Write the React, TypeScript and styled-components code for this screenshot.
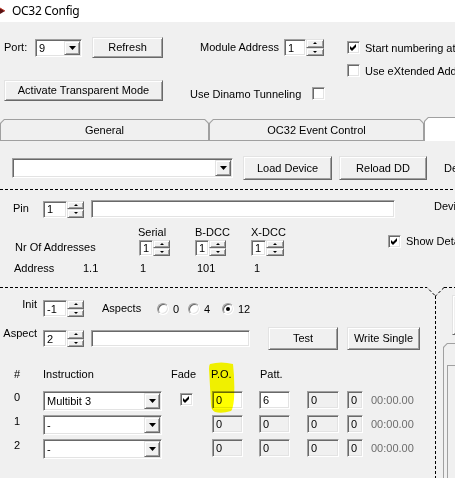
import React from "react";
import styled, { createGlobalStyle, css } from "styled-components";

const GlobalStyle = createGlobalStyle`
  html, body { margin: 0; padding: 0; background: #f0f0f0; }
  body {
    font-family: "Liberation Sans", Arial, sans-serif;
    font-size: 11px;
    color: #000;
  }
  *, *::before, *::after { box-sizing: border-box; }
`;

type Px = { $w?: number; $h?: number; $ml?: number; $mt?: number };

const sizing = css<Px>`
  ${({ $w }) => ($w !== undefined ? `width: ${$w}px; flex: 0 0 ${$w}px;` : "")}
  ${({ $h }) => ($h !== undefined ? `height: ${$h}px;` : "")}
  ${({ $ml }) => ($ml !== undefined ? `margin-left: ${$ml}px;` : "")}
  ${({ $mt }) => ($mt !== undefined ? `margin-top: ${$mt}px;` : "")}
`;

/* classic 3D edges */
const sunken = css`
  border: 1px solid;
  border-color: #a0a0a0 #ffffff #ffffff #a0a0a0;
  box-shadow: inset 1px 1px 0 #696969, inset -1px -1px 0 #e3e3e3;
`;

const raised = css`
  background: #f0f0f0;
  border: 1px solid;
  border-color: #e3e3e3 #696969 #696969 #e3e3e3;
  box-shadow: inset 1px 1px 0 #ffffff, inset -1px -1px 0 #a0a0a0;
`;

const dashedH = css`
  background-image: repeating-linear-gradient(to right, #000 0 3px, transparent 3px 5px);
`;

const Window = styled.div`
  width: 455px;
  height: 478px;
  overflow: hidden;
  background: #f0f0f0;
  white-space: nowrap;
`;

const TitleBar = styled.div`
  height: 22px;
  background: #fff;
  display: flex;
  align-items: center;
`;

const Title = styled.span`
  font-family: "Noto Sans", "Open Sans", sans-serif;
  font-size: 12px;
  letter-spacing: -0.3px;
  margin-left: 6px;
  padding-bottom: 1px;
`;

const Top = styled.div`
  padding-top: 15px;
`;

const Row = styled.div<Px & { $align?: string }>`
  display: flex;
  align-items: ${({ $align }) => $align ?? "center"};
  ${sizing}
`;

const Label = styled.span<Px & { $right?: boolean; $self?: string; $gray?: boolean }>`
  display: block;
  line-height: 13px;
  ${sizing}
  text-align: ${({ $right }) => ($right ? "right" : "left")};
  ${({ $self }) => ($self ? `align-self: ${$self};` : "")}
  color: ${({ $gray }) => ($gray ? "#6d6d6d" : "#000")};
`;

const Btn = styled.div<Px>`
  ${raised}
  ${sizing}
  display: flex;
  align-items: center;
  justify-content: center;
  padding-bottom: 1px;
`;

/* text box */
const Field = styled.div<Px & { $bg?: string }>`
  ${sunken}
  ${sizing}
  background: ${({ $bg }) => $bg ?? "#fff"};
  display: flex;
  align-items: center;
  padding-left: 3px;
`;

/* numeric up/down */
const SpinBox = styled.div<Px>`
  ${sizing}
  display: flex;
`;

const SpinText = styled.div<{ $tw: number }>`
  ${sunken}
  width: ${({ $tw }) => $tw}px;
  background: #fff;
  display: flex;
  align-items: center;
  padding-left: 3px;
`;

const SpinKeys = styled.div`
  flex: 1;
  display: flex;
  flex-direction: column;
`;

const SpinKey = styled.div`
  ${raised}
  flex: 1;
  display: flex;
  align-items: center;
  justify-content: center;
`;

const Tri = styled.span<{ $up?: boolean }>`
  width: 0;
  height: 0;
  border-left: 2px solid transparent;
  border-right: 2px solid transparent;
  ${({ $up }) => ($up ? "border-bottom: 2px solid #000;" : "border-top: 2px solid #000;")}
`;

const Spinner: React.FC<{ value: string; w: number; tw: number; h: number; ml?: number; mt?: number }> = ({
  value,
  w,
  tw,
  h,
  ml,
  mt,
}) => (
  <SpinBox $w={w} $h={h} $ml={ml} $mt={mt}>
    <SpinText $tw={tw}>{value}</SpinText>
    <SpinKeys>
      <SpinKey>
        <Tri $up />
      </SpinKey>
      <SpinKey>
        <Tri />
      </SpinKey>
    </SpinKeys>
  </SpinBox>
);

/* drop-down list */
const ComboFrame = styled.div<Px>`
  ${sunken}
  ${sizing}
  background: #fff;
  display: flex;
  padding: 1px;
`;

const ComboText = styled.div`
  flex: 1;
  display: flex;
  align-items: center;
  padding-left: 2px;
  overflow: hidden;
`;

const DropKey = styled.div`
  ${raised}
  width: 16px;
  display: flex;
  align-items: center;
  justify-content: center;
`;

const DownArrow = () => (
  <svg width="7" height="4" viewBox="0 0 7 4">
    <path d="M0 0h7L3.5 4z" fill="#000" />
  </svg>
);

const Combo: React.FC<Px & { text?: string }> = ({ text, ...rest }) => (
  <ComboFrame {...rest}>
    <ComboText>{text}</ComboText>
    <DropKey>
      <DownArrow />
    </DropKey>
  </ComboFrame>
);

/* check box */
const CheckBox = styled.span<Px>`
  ${sunken}
  ${sizing}
  width: 13px;
  height: 13px;
  flex: 0 0 13px;
  background: #fff;
  display: flex;
  align-items: center;
  justify-content: center;
`;

const Tick = () => (
  <svg width="7" height="7" viewBox="0 0 7 7">
    <path d="M0 2 L2 4 L6 0 L6 3 L2 7 L0 5 Z" fill="#000" />
  </svg>
);

const CheckRow = styled.div<Px>`
  ${sizing}
  display: flex;
  align-items: center;
  gap: 5px;
`;

const Check: React.FC<Px & { on?: boolean; label?: string }> = ({ on, label, ...rest }) => (
  <CheckRow {...rest}>
    <CheckBox>{on && <Tick />}</CheckBox>
    {label && <span>{label}</span>}
  </CheckRow>
);

/* option button */
const RadioRing = styled.span`
  width: 12px;
  height: 12px;
  flex: 0 0 12px;
  border-radius: 50%;
  border: 1px solid;
  border-color: #a0a0a0 #ffffff #ffffff #a0a0a0;
  box-shadow: inset 1px 1px 0 #696969, inset -1px -1px 0 #e3e3e3;
  background: #fff;
  display: flex;
  align-items: center;
  justify-content: center;
`;

const RadioDot = styled.span`
  width: 4px;
  height: 4px;
  border-radius: 50%;
  background: #000;
`;

const RadioRow = styled.div<Px>`
  ${sizing}
  display: flex;
  align-items: center;
  gap: 4px;
`;

const Radio: React.FC<Px & { on?: boolean; label: string }> = ({ on, label, ...rest }) => (
  <RadioRow {...rest}>
    <RadioRing>{on && <RadioDot />}</RadioRing>
    <span>{label}</span>
  </RadioRow>
);

/* tabs */
const TabStrip = styled.div`
  margin-top: 16px;
  height: 24px;
  display: flex;
  align-items: flex-end;
`;

const Tab = styled.div<{ $w: number; $sel?: boolean }>`
  flex: 0 0 ${({ $w }) => $w}px;
  height: ${({ $sel }) => ($sel ? 24 : 22)}px;
  background: #a0a0a0;
  clip-path: polygon(4px 0, calc(100% - 4px) 0, 100% 4px, 100% 100%, 0 100%, 0 4px);
  padding: 1px 1px ${({ $sel }) => ($sel ? 0 : 1)}px 1px;
  display: flex;
`;

const TabFace = styled.div<{ $sel?: boolean }>`
  flex: 1;
  background: ${({ $sel }) => ($sel ? "#fff" : "#f0f0f0")};
  clip-path: polygon(3.5px 0, calc(100% - 3.5px) 0, 100% 3.5px, 100% 100%, 0 100%, 0 3.5px);
  display: flex;
  align-items: center;
  justify-content: center;
`;

const TabPage = styled.div`
  padding-top: 15px;
`;

const DashRule = styled.div<Px>`
  ${sizing}
  height: 1px;
  ${dashedH}
`;

const AddrGrid = styled.div`
  margin-top: 7px;
  padding-left: 14px;
  display: grid;
  grid-template-columns: 124px 57px 56px 137px auto;
  grid-template-rows: 14px 18px 22px;
  align-items: center;
`;

const Cell = styled.div<Px & { $row?: string; $col?: string }>`
  ${sizing}
  display: flex;
  align-items: center;
  ${({ $row }) => ($row ? `grid-row: ${$row};` : "")}
  ${({ $col }) => ($col ? `grid-column: ${$col};` : "")}
`;

const FrameTop = styled.svg`
  display: block;
  margin-top: 8px;
`;

const Split = styled.div`
  display: flex;
  height: 182px;
`;

const LeftPane = styled.div`
  flex: 0 0 436px;
  padding-top: 4px;
  background-image: repeating-linear-gradient(to bottom, #000 0 3px, transparent 3px 5px);
  background-size: 1px 100%;
  background-position: right top;
  background-repeat: no-repeat;
`;

const RightPane = styled.div`
  flex: 1;
  display: flex;
  flex-direction: column;
`;

const SideTabs = styled.div`
  margin: 8px 0 0 7px;
  height: 160px;
  width: 60px;
  background: #a0a0a0;
  clip-path: polygon(4px 0, 100% 0, 100% 100%, 0 100%, 0 4px);
  padding: 1px 0 0 1px;
  display: flex;
`;

const SideTabsFace = styled.div`
  flex: 1;
  background: #f0f0f0;
  clip-path: polygon(3.5px 0, 100% 0, 100% 100%, 0 100%, 0 3.5px);
  display: flex;
  flex-direction: column;
`;

const SidePage = styled.div`
  flex: 1;
  margin: 21px 0 0 3px;
  border-top: 1px solid #a0a0a0;
  border-left: 1px solid #a0a0a0;
`;

/* pattern table */
const cols = "29px 128px 41px 47px 48px 40px 24px auto";

const Table = styled.div`
  position: relative;
  margin-top: 10px;
  padding-top: 7px;
`;

const HeadRow = styled.div`
  display: grid;
  grid-template-columns: ${cols};
  padding-left: 14px;
  height: 14px;
  align-items: center;
  margin-bottom: 10px;
`;

const BodyRows = styled.div`
  display: grid;
  grid-template-columns: ${cols};
  grid-auto-rows: 20px;
  row-gap: 4px;
  padding-left: 14px;
  align-items: start;
`;

const Marker = styled.svg`
  position: absolute;
  left: 206px;
  top: 1px;
  mix-blend-mode: multiply;
  pointer-events: none;
`;

const AppIcon = () => (
  <svg width="6" height="22" viewBox="0 0 6 22">
    <path d="M0 8 L5 11 L0 14 Z" fill="#5a1212" />
    <path d="M0 8 L5 11" stroke="#c0392b" strokeWidth="1" />
  </svg>
);

type Step = { n: string; instr: string; fade: boolean; po: string; patt: string; a: string; b: string; live: boolean };

const steps: Step[] = [
  { n: "0", instr: "Multibit 3", fade: true, po: "0", patt: "6", a: "0", b: "0", live: true },
  { n: "1", instr: "-", fade: false, po: "0", patt: "0", a: "0", b: "0", live: false },
  { n: "2", instr: "-", fade: false, po: "0", patt: "0", a: "0", b: "0", live: false },
];

const OFF = "#f0f0f0";

export default function App() {
  return (
    <>
      <GlobalStyle />
      <Window>
        <TitleBar>
          <AppIcon />
          <Title>OC32 Config</Title>
        </TitleBar>

        <Top>
          <Row $h={21}>
            <Label $ml={4} $w={31}>
              Port:
            </Label>
            <Combo $w={47} $h={18} text="9" />
            <Btn $ml={10} $w={71} $h={21}>
              Refresh
            </Btn>
            <Label $ml={37} $w={84}>
              Module Address
            </Label>
            <Spinner value="1" w={40} tw={22} h={17} />
            <Check $ml={23} on label="Start numbering at" />
          </Row>
          <Row $h={13} $mt={6}>
            <Check $ml={347} label="Use eXtended Add" />
          </Row>
          <Row $h={21} $mt={3} $align="flex-start">
            <Btn $ml={4} $w={159} $h={21}>
              Activate Transparent Mode
            </Btn>
            <Label $ml={27} $w={122} $mt={8}>
              Use Dinamo Tunneling
            </Label>
            <CheckBox $mt={7} />
          </Row>
        </Top>

        <TabStrip>
          <Tab $w={209}>
            <TabFace>General</TabFace>
          </Tab>
          <Tab $w={215}>
            <TabFace>OC32 Event Control</TabFace>
          </Tab>
          <Tab $w={60} $sel>
            <TabFace $sel />
          </Tab>
        </TabStrip>

        <TabPage>
          <Row $h={24}>
            <Combo $ml={12} $w={221} $h={20} />
            <Btn $ml={10} $w={89} $h={24}>
              Load Device
            </Btn>
            <Btn $ml={7} $w={88} $h={24}>
              Reload DD
            </Btn>
            <Label $ml={17}>De</Label>
          </Row>

          <DashRule $mt={9} />

          <Row $h={18} $mt={10}>
            <Label $ml={13} $w={30} $self="flex-start" $mt={2}>
              Pin
            </Label>
            <Spinner value="1" w={41} tw={24} h={17} />
            <Field $ml={7} $w={304} $h={18} />
            <Label $ml={39} $self="flex-start" $mt={0}>
              Devi
            </Label>
          </Row>

          <AddrGrid>
            <Cell $row="1" $col="2">Serial</Cell>
            <Cell $row="1" $col="3">B-DCC</Cell>
            <Cell $row="1" $col="4">X-DCC</Cell>
            <Cell $row="1 / 3" $col="5">
              <Check on label="Show Deta" />
            </Cell>

            <Cell $row="2" $col="1" $ml={1} $mt={-3}>
              Nr Of Addresses
            </Cell>
            <Cell $row="2" $col="2" $ml={1}>
              <Spinner value="1" w={31} tw={14} h={16} />
            </Cell>
            <Cell $row="2" $col="3">
              <Spinner value="1" w={31} tw={14} h={16} />
            </Cell>
            <Cell $row="2" $col="4">
              <Spinner value="1" w={33} tw={15} h={16} />
            </Cell>

            <Cell $row="3" $col="1">
              <Label $w={69}>Address</Label>
              <span>1.1</span>
            </Cell>
            <Cell $row="3" $col="2" $ml={2}>
              1
            </Cell>
            <Cell $row="3" $col="3" $ml={2}>
              101
            </Cell>
            <Cell $row="3" $col="4" $ml={3}>
              1
            </Cell>
          </AddrGrid>

          <FrameTop width="455" height="9" viewBox="0 0 455 9">
            <path
              d="M0 0.5 H427 L435.5 9 M444 0.5 L435.5 9 M444 0.5 H455"
              stroke="#000"
              strokeWidth="1"
              strokeDasharray="3 2"
              fill="none"
            />
          </FrameTop>

          <Split>
            <LeftPane>
              <Row $h={17}>
                <Label $w={37} $right $self="flex-start" $mt={-2}>
                  Init
                </Label>
                <Spinner value="-1" w={41} tw={24} h={17} ml={6} />
                <Label $ml={18} $w={55}>
                  Aspects
                </Label>
                <Radio $w={31} label="0" />
                <Radio $w={34} label="4" />
                <Radio on label="12" />
              </Row>

              <Row $h={23} $mt={10}>
                <Label $w={37} $right $self="flex-start" $mt={0}>
                  Aspect
                </Label>
                <Spinner value="2" w={41} tw={24} h={17} ml={6} />
                <Field $ml={7} $w={159} $h={17} />
                <Btn $ml={18} $w={70} $h={23}>
                  Test
                </Btn>
                <Btn $ml={9} $w={73} $h={23}>
                  Write Single
                </Btn>
              </Row>

              <Table>
                <HeadRow>
                  <span>#</span>
                  <span>Instruction</span>
                  <span>Fade</span>
                  <Label $ml={-1}>P.O.</Label>
                  <Label $ml={1}>Patt.</Label>
                </HeadRow>
                <BodyRows>
                  {steps.map((s) => (
                    <React.Fragment key={s.n}>
                      <Label $mt={0}>{s.n}</Label>
                      <Combo $w={119} $h={20} text={s.instr} />
                      <Cell>{s.fade && <Check $ml={9} $mt={2} on />}</Cell>
                      <Field $w={31} $h={18} $bg={s.live ? "#fff" : OFF}>
                        {s.po}
                      </Field>
                      <Field $w={31} $h={18} $bg={s.live ? "#fff" : OFF}>
                        {s.patt}
                      </Field>
                      <Field $w={32} $h={18} $bg={OFF}>
                        {s.a}
                      </Field>
                      <Field $w={16} $h={18} $bg={OFF}>
                        {s.b}
                      </Field>
                      <Label $gray $mt={3}>
                        00:00.00
                      </Label>
                    </React.Fragment>
                  ))}
                </BodyRows>
                <Marker width="32" height="54" viewBox="0 0 32 54">
                  <path
                    d="M4 3 Q 15 0 27 3 Q 29 20 28 38 Q 27 48 25 50 Q 16 53 9 51 Q 5 49 5 44 Q 4 25 3 8 Q 3 4 4 3 Z"
                    fill="#ffff00"
                  />
                </Marker>
              </Table>
            </LeftPane>

            <RightPane>
              <Btn $ml={16} $w={40} $h={24} $mt={-1} />
              <SideTabs>
                <SideTabsFace>
                  <SidePage />
                </SideTabsFace>
              </SideTabs>
            </RightPane>
          </Split>
        </TabPage>
      </Window>
    </>
  );
}
